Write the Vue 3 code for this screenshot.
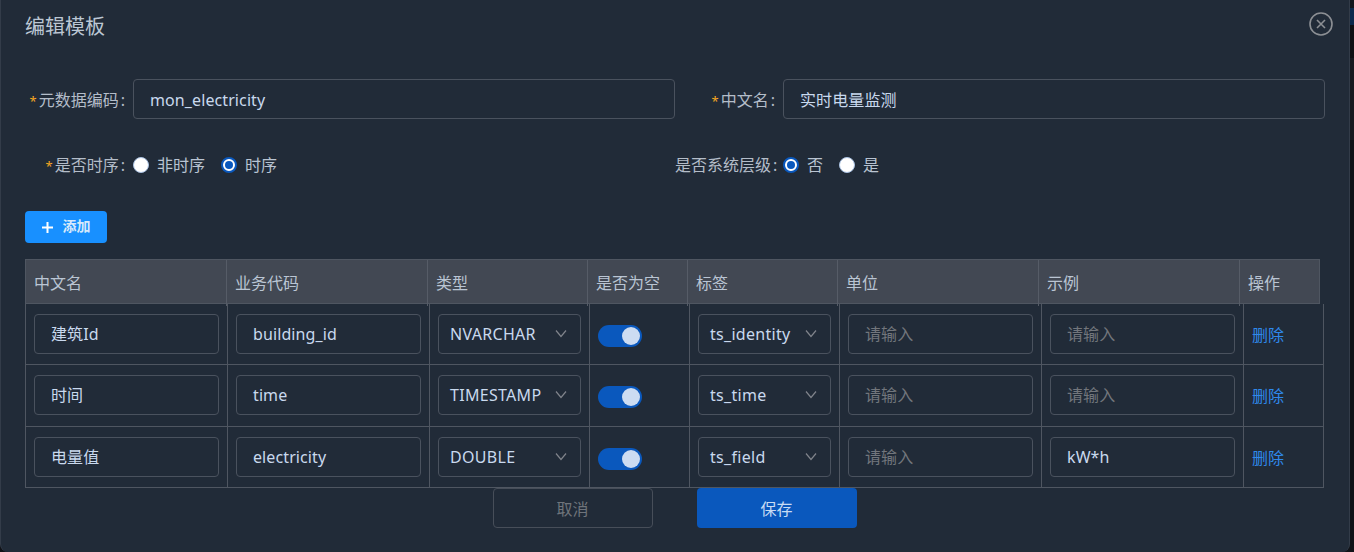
<script setup>
const heads = ['中文名', '业务代码', '类型', '是否为空', '标签', '单位', '示例', '操作']
const rows = [
  { name: '建筑Id', code: 'building_id', type: 'NVARCHAR', tag: 'ts_identity', unit: '', sample: '' },
  { name: '时间', code: 'time', type: 'TIMESTAMP', tag: 'ts_time', unit: '', sample: '' },
  { name: '电量值', code: 'electricity', type: 'DOUBLE', tag: 'ts_field', unit: '', sample: 'kW*h' }
]
</script>

<template>
  <div class="page">
    <div class="modal">
      <div class="title-row">
        <span class="title">编辑模板</span>
        <svg class="close" width="24" height="24" viewBox="0 0 24 24" fill="none" stroke="#8c8f94">
          <circle cx="12" cy="12" r="11" stroke-width="1.6" />
          <path d="M8 8l8 8M16 8l-8 8" stroke-width="1.6" />
        </svg>
      </div>

      <div class="form-row first">
        <div class="field">
          <label class="label"><i>*</i>元数据编码<b>:</b></label>
          <div class="input big">mon_electricity</div>
        </div>
        <div class="field">
          <label class="label"><i>*</i>中文名<b>:</b></label>
          <div class="input big">实时电量监测</div>
        </div>
      </div>

      <div class="form-row second">
        <div class="field">
          <label class="label"><i>*</i>是否时序<b>:</b></label>
          <span class="radio"></span><span class="radio-text">非时序</span>
          <span class="radio on"></span><span class="radio-text">时序</span>
        </div>
        <div class="field">
          <label class="label">是否系统层级<b>:</b></label>
          <span class="radio on"></span><span class="radio-text">否</span>
          <span class="radio"></span><span class="radio-text">是</span>
        </div>
      </div>

      <button class="add">
        <svg width="11" height="11" viewBox="0 0 11 11" stroke="#fff" stroke-width="2"><path d="M5.5 0v11M0 5.5h11" /></svg>
        <span>添加</span>
      </button>

      <div class="thead">
        <div v-for="h in heads" :key="h" class="th">{{ h }}</div>
      </div>
      <div class="tbody">
        <div v-for="r in rows" :key="r.code" class="tr">
          <div class="td"><div class="input">{{ r.name }}</div></div>
          <div class="td"><div class="input">{{ r.code }}</div></div>
          <div class="td">
            <div class="select">
              <span>{{ r.type }}</span>
              <svg width="12" height="10" viewBox="0 0 12 10" fill="none" stroke="#80848b" stroke-width="1.2"><path d="M1 1.5l5 6 5-6" /></svg>
            </div>
          </div>
          <div class="td"><div class="switch"><span class="knob"></span></div></div>
          <div class="td">
            <div class="select">
              <span>{{ r.tag }}</span>
              <svg width="12" height="10" viewBox="0 0 12 10" fill="none" stroke="#80848b" stroke-width="1.2"><path d="M1 1.5l5 6 5-6" /></svg>
            </div>
          </div>
          <div class="td"><div class="input" :class="{ ph: !r.unit }">{{ r.unit || '请输入' }}</div></div>
          <div class="td"><div class="input" :class="{ ph: !r.sample }">{{ r.sample || '请输入' }}</div></div>
          <div class="td"><a class="del">删除</a></div>
        </div>
      </div>

      <div class="footer">
        <button class="btn cancel">取消</button>
        <button class="btn save">保存</button>
      </div>
    </div>
  </div>
</template>

<style scoped>
.page {
  width: 1354px;
  height: 552px;
  overflow: hidden;
  background: linear-gradient(#12161c 0 8px, #0c2a4d 8px 25px, #0f1115 25px 58px, #171a20 58px 140px, #101217 140px);
  font-family: "Noto Sans", "Noto Sans CJK SC", sans-serif;
  color: #c9d4e3;
  font-size: 16px;
}
.modal {
  box-sizing: border-box;
  width: 1350px;
  height: 552px;
  background: #212b38;
  padding: 0 25px 0 24px;
  border-left: 1px solid #333c49;
  border-right: 1px solid #333c49;
  border-radius: 0 0 8px 8px;
  overflow: hidden;
}
.title-row {
  height: 50px;
  display: flex;
  align-items: center;
  justify-content: space-between;
}
.title {
  font-size: 20px;
  color: #bcc7d4;
}
.close {
  margin-right: -9px;
  margin-top: -2px;
}
.form-row {
  display: grid;
  grid-template-columns: 650px 650px;
}
.first { margin-top: 29px; }
.second { margin-top: 26px; height: 40px; }
.field {
  display: flex;
  align-items: center;
}
.label {
  width: 108px;
  flex: none;
  padding-right: 8px;
  box-sizing: border-box;
  text-align: right;
  white-space: nowrap;
  color: #b4bdc9;
  font-size: 16px;
}
.label b {
  font-weight: 400;
  margin-left: 2px;
}
.label i {
  color: #f5a623;
  font-style: normal;
  margin-right: 2px;
  font-size: 13px;
}
.second .label,
.second .radio-text {
  margin-top: -2px;
}
.input {
  box-sizing: border-box;
  flex: 1;
  height: 40px;
  line-height: 38px;
  border: 1px solid #4a525e;
  border-radius: 4px;
  padding: 0 16px;
  color: #c9d9ee;
  white-space: nowrap;
  overflow: hidden;
  letter-spacing: 0.1px;
}
.big {
  flex: none;
  width: 542px;
  line-height: 40px;
}
.ph { color: #72767c; }
.radio {
  box-sizing: border-box;
  position: relative;
  width: 16px;
  height: 16px;
  border-radius: 50%;
  background: #fff;
  border: 1px solid #a9c1e2;
  margin-right: 8px;
  flex: none;
}
.radio.on {
  border: 2px solid #0a58bd;
}
.radio.on::after {
  content: "";
  position: absolute;
  left: 2px;
  top: 2px;
  width: 8px;
  height: 8px;
  border-radius: 50%;
  background: #0a58bd;
}
.radio-text {
  color: #b9c4d2;
  font-size: 16px;
  margin-right: 16px;
}
.add {
  display: flex;
  align-items: center;
  justify-content: center;
  gap: 10px;
  width: 82px;
  height: 32px;
  margin-top: 26px;
  border: 0;
  border-radius: 4px;
  background: #1890ff;
  color: #d6e9fb;
  font: 600 14px "Noto Sans CJK SC", sans-serif;
}
.add span {
  margin-top: -4px;
}
.thead {
  display: grid;
  grid-template-columns: 201px 201px 160px 100px 150px 201px 201px 81px;
  width: 1295px;
  box-sizing: border-box;
  height: 45px;
  margin-top: 16px;
  background: #424853;
  border: 1px solid #4f5661;
}
.th {
  border-right: 1px solid #565c67;
  padding-left: 8px;
  line-height: 46px;
  font-size: 16px;
  color: #bac5d3;
}
.th:last-child { border-right: 0; }
.tbody {
  width: 1299px;
  border-left: 1px solid #4f5661;
  box-sizing: border-box;
}
.tr {
  display: grid;
  grid-template-columns: 202px 202px 160px 100px 150px 202px 202px 80px;
  height: 61.3px;
  box-sizing: border-box;
  border-bottom: 1px solid #4f5661;
}
.td {
  box-sizing: border-box;
  border-right: 1px solid #4f5661;
  padding: 0 8px;
  display: flex;
  align-items: center;
}
.td .input { width: 185px; }
.select {
  box-sizing: border-box;
  flex: 1;
  height: 40px;
  border: 1px solid #4a525e;
  border-radius: 4px;
  padding: 0 13px 0 11px;
  display: flex;
  align-items: center;
  justify-content: space-between;
  color: #c9d9ee;
  white-space: nowrap;
  letter-spacing: 0.3px;
}
.switch {
  position: relative;
  width: 44px;
  height: 22px;
  margin-top: 4px;
  border-radius: 11px;
  background: #0a58bd;
}
.knob {
  position: absolute;
  right: 2px;
  top: 2px;
  width: 18px;
  height: 18px;
  border-radius: 50%;
  background: #ccdcf2;
}
.del {
  color: #2f89ea;
  font-size: 16px;
}
.footer {
  display: flex;
  justify-content: center;
  gap: 44px;
}
.btn {
  width: 160px;
  height: 40px;
  border-radius: 4px;
  font: 16px "Noto Sans CJK SC", sans-serif;
}
.cancel {
  background: transparent;
  border: 1px solid #474e59;
  color: #6f747b;
}
.save {
  border: 0;
  background: #0a58bd;
  color: #c8dcf4;
}
</style>

<style>
html, body { margin: 0; background: #101217; }
</style>
